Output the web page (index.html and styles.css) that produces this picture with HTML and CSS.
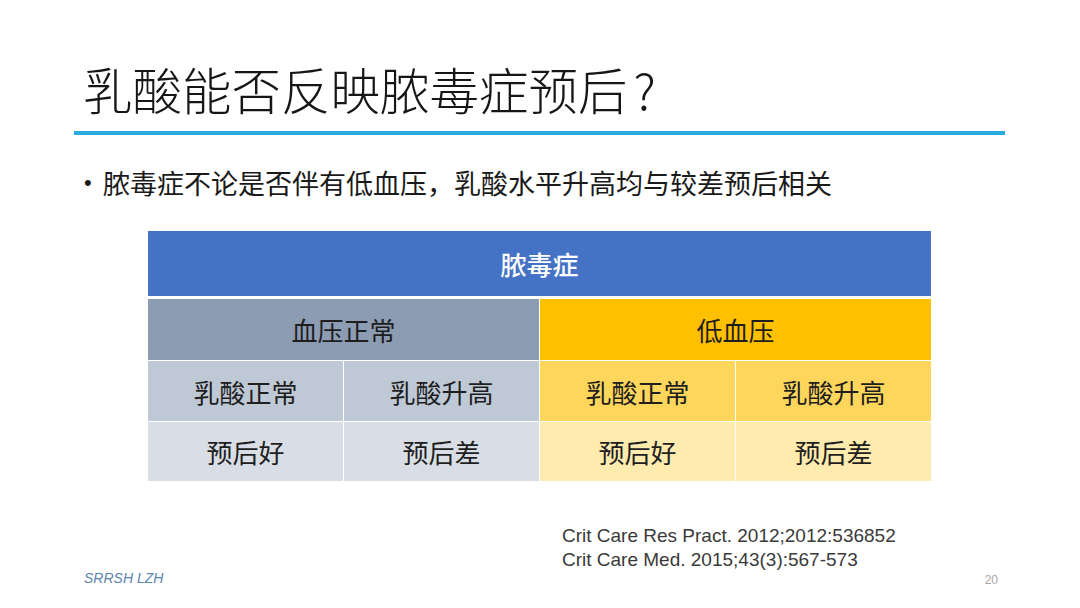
FILE: index.html
```html
<!DOCTYPE html>
<html lang="zh-CN">
<head>
<meta charset="utf-8">
<title>乳酸能否反映脓毒症预后？</title>
<link rel="stylesheet" href="styles.css">
</head>
<body>
<div class="slide">
  <h1 class="title">乳酸能否反映脓毒症预后<span class="qmark">?</span></h1>
  <div class="rule"></div>
  <ul class="bullets">
    <li>脓毒症不论是否伴有低血压，乳酸水平升高均与较差预后相关</li>
  </ul>
  <div class="table">
    <div class="cell head">脓毒症</div>
    <div class="cell gray1 span2">血压正常</div>
    <div class="cell gold1 span2">低血压</div>
    <div class="cell gray2">乳酸正常</div>
    <div class="cell gray2">乳酸升高</div>
    <div class="cell gold2">乳酸正常</div>
    <div class="cell gold2">乳酸升高</div>
    <div class="cell gray3">预后好</div>
    <div class="cell gray3">预后差</div>
    <div class="cell gold3">预后好</div>
    <div class="cell gold3">预后差</div>
  </div>
  <div class="refs">
    <div class="ref">Crit Care Res Pract. 2012;2012:536852</div>
    <div class="ref">Crit Care Med. 2015;43(3):567‑573</div>
  </div>
  <div class="footer">
    <span class="author">SRRSH LZH</span>
    <span class="page">20</span>
  </div>
</div>
</body>
</html>
```

FILE: styles.css
```css
html, body {
  margin: 0;
  padding: 0;
  background: #ffffff;
}

.slide {
  width: 1080px;
  height: 608px;
  box-sizing: border-box;
  overflow: hidden;
  font-family: "Noto Sans CJK SC", "Noto Sans", sans-serif;
  color: #1a1a1a;
  display: flex;
  flex-direction: column;
}

.title {
  margin: 58px 0 0 83px;
  font-family: "Noto Sans CJK SC Light", "Noto Sans CJK SC DemiLight", "Noto Sans CJK SC", sans-serif;
  font-size: 49.5px;
  line-height: 62px;
  font-weight: 300;
  color: #161616;
  letter-spacing: 0;
}

.qmark {
  margin-left: 6px;
}

.rule {
  margin: 11px 0 0 74px;
  width: 931px;
  height: 4px;
  background: #29abe0;
}

.bullets {
  list-style: none;
  margin: 30px 0 0 0;
  padding: 0 0 0 84px;
}

.bullets li {
  display: flex;
  align-items: center;
  font-size: 27px;
  line-height: 36px;
  font-weight: 400;
  color: #1a1a1a;
}

.bullets li::before {
  content: "•";
  font-family: "Liberation Sans", sans-serif;
  font-size: 22px;
  width: 19px;
}

.table {
  margin: 30px 0 0 148px;
  width: 783px;
  display: grid;
  grid-template-columns: repeat(4, 1fr);
  grid-template-rows: 67px 61px 60px 59px;
  gap: 1px;
  background: #ffffff;
}

.cell {
  display: flex;
  align-items: center;
  justify-content: center;
  font-size: 26px;
  color: #1e1e1e;
  font-weight: 400;
}

.head {
  grid-column: span 4;
  background: #4472c4;
  color: #ffffff;
  font-weight: 500;
  margin-bottom: 2px;
}

.span2 { grid-column: span 2; }

.gray1 { background: #8c9cb3; }
.gray2 { background: #bfc9d6; }
.gray3 { background: #d9dee6; }
.gold1 { background: #ffc000; }
.gold2 { background: #ffd65c; }
.gold3 { background: #ffebae; }

.refs {
  margin: 43px 0 0 562px;
  font-family: "Liberation Sans", "Noto Sans", sans-serif;
  font-size: 19px;
  line-height: 24px;
  color: #3a3a3a;
}

.footer {
  display: flex;
  justify-content: space-between;
  align-items: center;
  height: 20px;
  margin: -4px 0 0 84px;
  width: 914px;
}

.author {
  font-family: "Liberation Sans", "Noto Sans", sans-serif;
  font-style: italic;
  font-size: 14px;
  line-height: 20px;
  color: #5b84ae;
}

.page {
  font-family: "Liberation Sans", "Noto Sans", sans-serif;
  font-size: 12px;
  line-height: 20px;
  margin-top: 4px;
  color: #a6a6a6;
}
```
